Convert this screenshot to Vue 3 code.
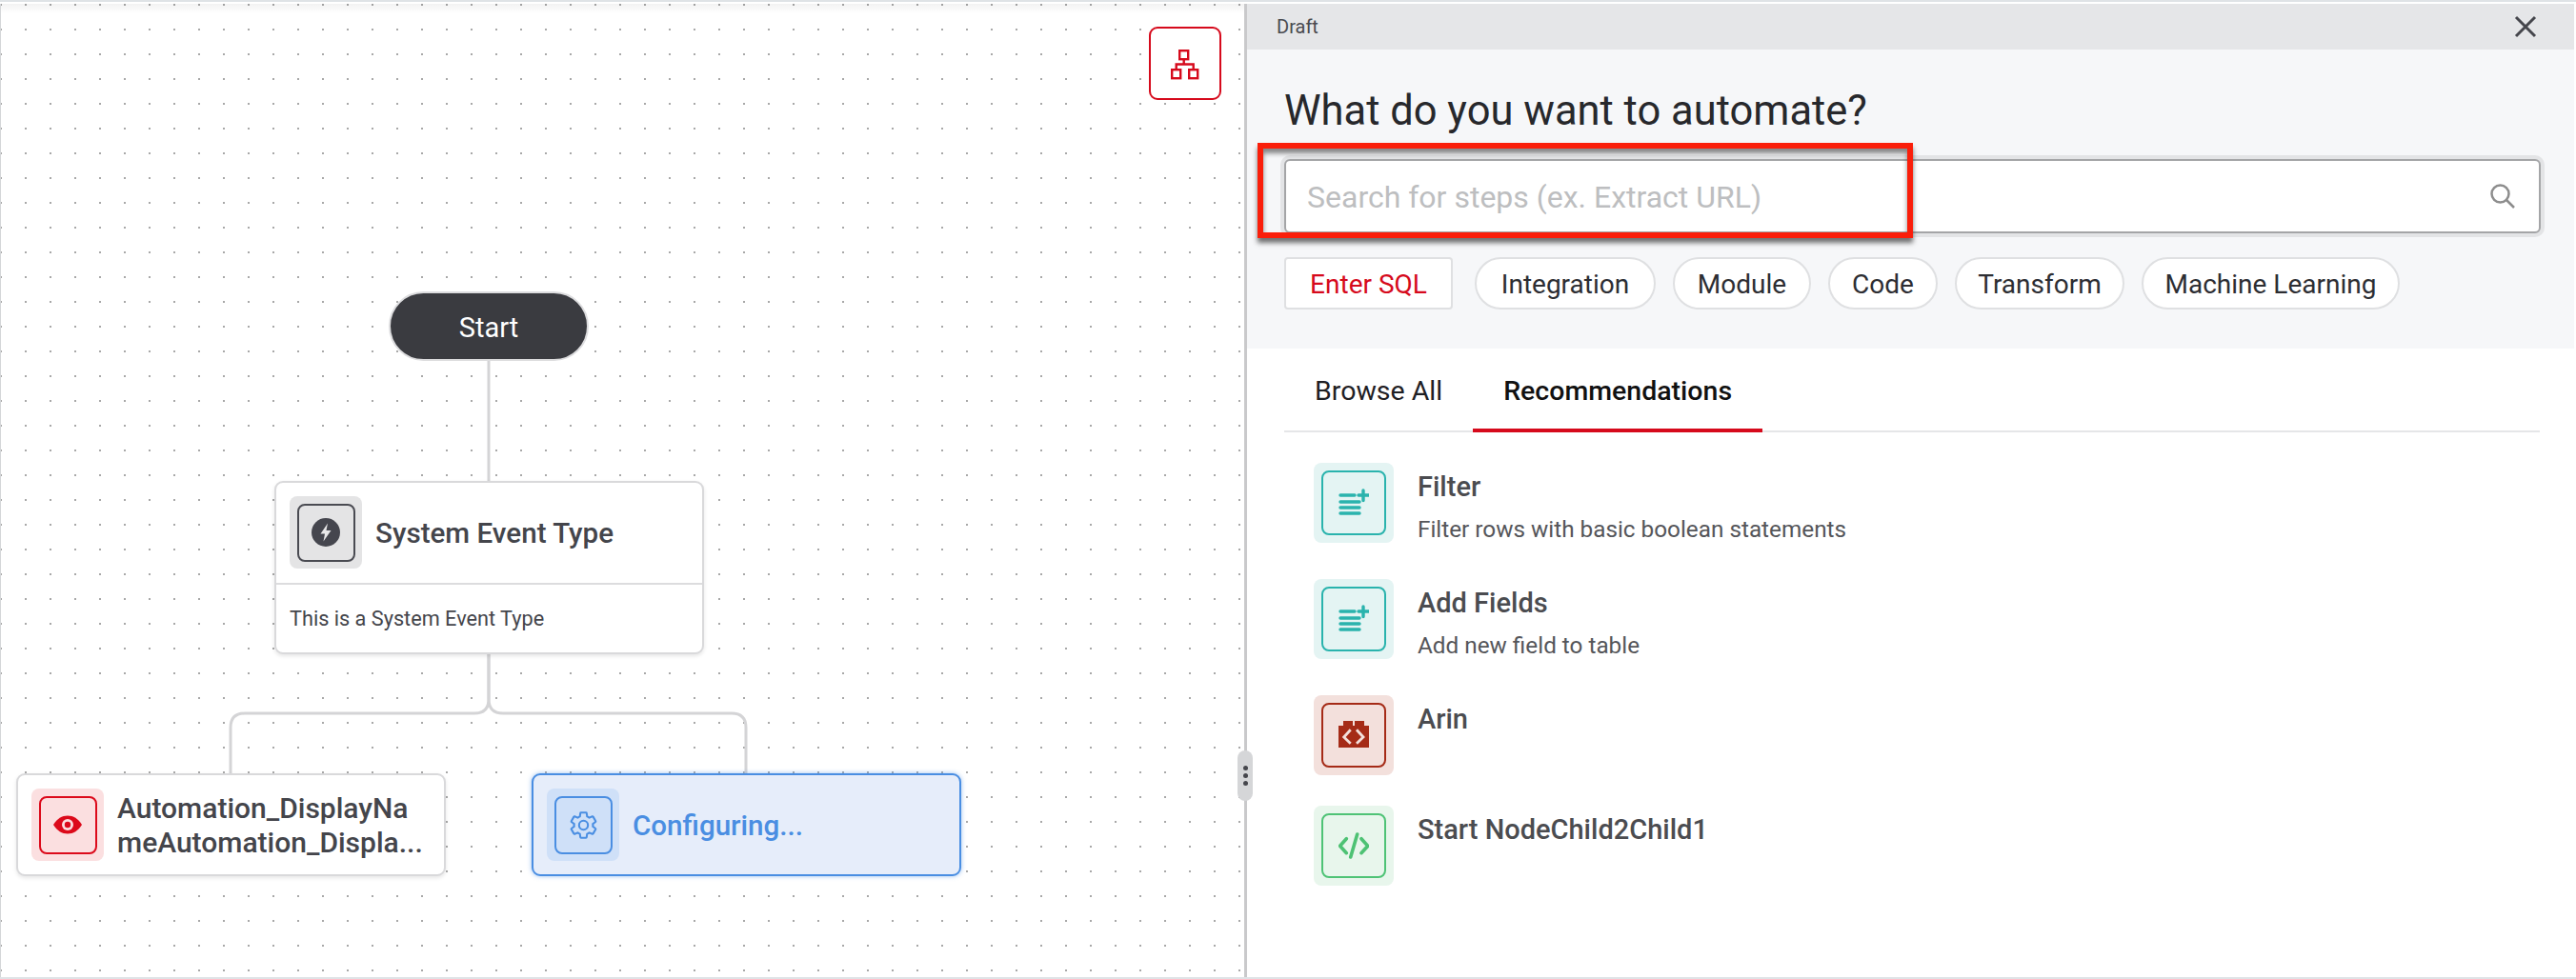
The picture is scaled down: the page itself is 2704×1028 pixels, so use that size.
<script setup>
const chips = [
  { label: 'Integration', width: 190 },
  { label: 'Module', width: 145 },
  { label: 'Code', width: 115 },
  { label: 'Transform', width: 178 },
  { label: 'Machine Learning', width: 271 }
]
const steps = [
  { title: 'Filter', desc: 'Filter rows with basic boolean statements', theme: 'teal', icon: 'list' },
  { title: 'Add Fields', desc: 'Add new field to table', theme: 'teal', icon: 'list' },
  { title: 'Arin', desc: '', theme: 'brick', icon: 'block' },
  { title: 'Start NodeChild2Child1', desc: '', theme: 'green', icon: 'code' }
]
</script>

<template>
  <div class="page">
    <div class="strip-top"></div>
    <div class="main">
      <section class="canvas">
        <button class="tree-btn" aria-label="Layout">
          <svg width="32" height="32" viewBox="0 0 32 32" fill="none" stroke="currentColor" stroke-width="2.4">
            <rect x="10.2" y="1.2" width="9" height="9" />
            <rect x="2.2" y="21.2" width="9" height="9" />
            <rect x="20.2" y="21.2" width="9" height="9" />
            <path d="M14.7 10.5V15.5M6.7 21V15.5H24.7V21" />
          </svg>
        </button>

        <svg class="wires" width="1306" height="1022" fill="none" stroke="#d4d4d6" stroke-width="3">
          <path d="M513 370V505" />
          <path d="M513 680V730Q513 745 498 745H257Q242 745 242 760V812" />
          <path d="M513 680V730Q513 745 528 745H768Q783 745 783 760V812" />
        </svg>

        <div class="start"><span class="start-label">Start</span></div>

        <div class="node event">
          <div class="event-head">
            <span class="ibox node-box gray">
              <span class="iframe">
                <svg width="32" height="32" viewBox="0 0 32 32">
                  <circle cx="16" cy="16" r="15" fill="#45464e" />
                  <path d="M18 6.5L10.5 17.5H15L13.5 25.5L21.5 14H16.5Z" fill="#e8e8e9" />
                </svg>
              </span>
            </span>
            <span class="node-title">System Event Type</span>
          </div>
          <div class="event-desc">This is a System Event Type</div>
        </div>

        <div class="node child auto">
          <span class="ibox node-box red">
            <span class="iframe">
              <svg width="32" height="20" viewBox="0 0 32 20">
                <path d="M1 10C5 3.5 10 0.5 16 0.5S27 3.5 31 10C27 16.5 22 19.5 16 19.5S5 16.5 1 10Z" fill="#dc0a1b" />
                <circle cx="16" cy="10" r="6" fill="#fbdfe0" />
                <circle cx="16" cy="10" r="3.2" fill="#dc0a1b" />
              </svg>
            </span>
          </span>
          <span class="node-title wrap">Automation_DisplayNa<br />meAutomation_Displa...</span>
        </div>

        <div class="node child config">
          <span class="ibox node-box blue">
            <span class="iframe">
              <svg width="33" height="33" viewBox="0 0 24 24" fill="none" stroke="#4a8ee2" stroke-width="1.5">
                <path d="M19.14 12.94c.04-.3.06-.61.06-.94 0-.32-.02-.64-.07-.94l2.03-1.58c.18-.14.23-.41.12-.61l-1.92-3.32c-.12-.22-.37-.29-.59-.22l-2.39.96c-.5-.38-1.03-.7-1.62-.94l-.36-2.54c-.04-.24-.24-.41-.48-.41h-3.84c-.24 0-.43.17-.47.41l-.36 2.54c-.59.24-1.13.57-1.62.94l-2.39-.96c-.22-.08-.47 0-.59.22L2.74 8.87c-.12.21-.08.47.12.61l2.03 1.58c-.05.3-.09.63-.09.94s.02.64.07.94l-2.03 1.58c-.18.14-.23.41-.12.61l1.92 3.32c.12.22.37.29.59.22l2.39-.96c.5.38 1.03.7 1.62.94l.36 2.54c.05.24.24.41.48.41h3.84c.24 0 .44-.17.47-.41l.36-2.54c.59-.24 1.13-.56 1.62-.94l2.39.96c.22.08.47 0 .59-.22l1.92-3.32c.12-.22.07-.47-.12-.61l-2.01-1.58z" />
                <circle cx="12" cy="12" r="3.4" />
              </svg>
            </span>
          </span>
          <span class="node-title blue-text">Configuring...</span>
        </div>

        <div class="handle"><i></i><i></i><i></i></div>
      </section>

      <section class="panel">
        <header class="draft">
          <span>Draft</span>
          <svg width="24" height="24" viewBox="0 0 24 24" stroke="#45464c" stroke-width="3" fill="none">
            <path d="M2 2L22 22M22 2L2 22" />
          </svg>
        </header>

        <div class="intro">
          <h1>What do you want to automate?</h1>
          <div class="search">
            <span class="placeholder">Search for steps (ex. Extract URL)</span>
            <svg width="28" height="28" viewBox="0 0 28 28" fill="none" stroke="#8d8d8d" stroke-width="2.5">
              <circle cx="11.5" cy="11.5" r="9" />
              <path d="M18 18L26 26" />
            </svg>
          </div>
          <div class="chips">
            <span class="chip sql">Enter SQL</span>
            <span v-for="c in chips" :key="c.label" class="chip" :style="{ width: c.width + 'px' }">{{ c.label }}</span>
          </div>
        </div>

        <nav class="tabs">
          <span class="tab">Browse All</span>
          <span class="tab active">Recommendations</span>
        </nav>

        <ul class="steps">
          <li v-for="s in steps" :key="s.title" class="step">
            <span class="ibox step-box" :class="s.theme">
              <span class="iframe">
                <svg v-if="s.icon === 'list'" width="32" height="32" viewBox="0 0 32 32" fill="none" stroke="#2ab3ad" stroke-width="3.4" stroke-linecap="round">
                  <path d="M2 8H17M2 15H22M2 21H22M2 27H22M26 3V13.5M21 8H31.5" />
                </svg>
                <svg v-else-if="s.icon === 'block'" width="32" height="32" viewBox="0 0 32 32">
                  <path d="M5 1H15V6H17V1H27V6H32V29H0V6H5Z" fill="#a52b17" />
                  <path d="M12.7 10.3L5.7 18L12.7 24.7M19 10.3L26 18L19 24.7" fill="none" stroke="#f3e0dc" stroke-width="2.8" />
                </svg>
                <svg v-else width="32" height="32" viewBox="0 0 32 32" fill="none" stroke="#4ec274" stroke-width="3.6" stroke-linecap="round" stroke-linejoin="round">
                  <path d="M8.3 8.7L1.6 16.3L8.3 23.7M24 8.7L30.8 16.3L24 23.7M19.7 4L12.7 28" />
                </svg>
              </span>
            </span>
            <span class="step-text">
              <span class="step-title">{{ s.title }}</span>
              <span v-if="s.desc" class="step-desc">{{ s.desc }}</span>
            </span>
          </li>
        </ul>

        <div class="callout"></div>
      </section>
      <div class="edge"></div>
    </div>
    <div class="strip-bottom"></div>
  </div>
</template>

<style>
html, body { margin: 0; background: #fff; }
</style>

<style scoped>
.page {
  width: 2704px;
  height: 1028px;
  display: flex;
  flex-direction: column;
  overflow: hidden;
  font-family: Roboto, "Liberation Sans", sans-serif;
  background: #fff;
}
.strip-top { height: 2px; background: #dfe3e6; margin-bottom: 2px; flex: none; }
.strip-bottom { height: 2px; background: #dfe3e6; flex: none; }
.main { flex: 1; display: flex; min-height: 0; }
.edge { width: 2px; background: #fff; flex: none; }

.canvas {
  position: relative;
  width: 1309px;
  flex: none;
  box-sizing: border-box;
  border-left: 1px solid #d4d6d8;
  border-right: 3px solid #c9c9cb;
  background-color: #fff;
  background-image:
    linear-gradient(rgba(0, 0, 0, 0.05), rgba(0, 0, 0, 0) 10px),
    radial-gradient(circle at 1px 1px, #a8a8a8 0.9px, rgba(255, 255, 255, 0) 1.2px);
  background-size: 100% 12px, 26px 26px;
  background-repeat: no-repeat, repeat;
  background-origin: border-box;
}
.tree-btn {
  position: absolute;
  left: 1205px;
  top: 24px;
  width: 76px;
  height: 77px;
  padding: 2px 0 0;
  box-sizing: border-box;
  border: 2px solid #d60a1c;
  border-radius: 9px;
  background: #fff;
  color: #d60a1c;
  display: flex;
  align-items: center;
  justify-content: center;
}
.wires { position: absolute; left: -1px; top: 0; }
.start {
  position: absolute;
  left: 407px;
  top: 302px;
  width: 210px;
  height: 73px;
  box-sizing: border-box;
  border: 2px solid #dcdcde;
  border-radius: 37px;
  background: #3a3b40;
  color: #fff;
  font-size: 29px;
  line-height: 71px;
  text-align: center;
}
.start-label { display: block; padding-top: 1px; }
.node {
  position: absolute;
  box-sizing: border-box;
  background: #fff;
  border: 2px solid #d9d9db;
  border-radius: 9px;
  box-shadow: 0 2px 4px rgba(0, 0, 0, 0.1);
}
.event { left: 287px; top: 501px; width: 451px; height: 182px; }
.event-head {
  height: 107px;
  box-sizing: border-box;
  padding: 14px 0 0 14px;
  display: flex;
  align-items: flex-start;
  gap: 14px;
  border-bottom: 2px solid #dcdcde;
}
.event-head .node-title { line-height: 78px; }
.event-desc {
  padding-left: 14px;
  font-size: 21.7px;
  line-height: 72px;
  color: #44454b;
}
.child {
  top: 808px;
  width: 451px;
  height: 108px;
  display: flex;
  align-items: center;
  padding-left: 14px;
  gap: 14px;
}
.auto { left: 16px; }
.config {
  left: 557px;
  background: #e6edfa;
  border-color: #4a8ee2;
  box-shadow: 0 0 5px rgba(74, 142, 226, 0.55);
}
.node-title {
  font-size: 29.6px;
  font-weight: 500;
  color: #44454b;
  line-height: 36px;
  white-space: nowrap;
}
.wrap { font-size: 30px; padding-top: 1px; }
.blue-text { color: #4a8ee2; padding-top: 2px; }
.handle {
  position: absolute;
  left: 1298px;
  top: 784px;
  width: 16px;
  height: 53px;
  background: #d5d6d8;
  border-radius: 8px;
  z-index: 2;
  display: flex;
  flex-direction: column;
  align-items: center;
  justify-content: center;
  gap: 3px;
}
.handle i { width: 5px; height: 5px; border-radius: 50%; background: #45464c; }

.ibox { display: flex; align-items: center; justify-content: center; flex: none; border-radius: 8px; }
.iframe {
  box-sizing: border-box;
  border: 2px solid;
  border-radius: 8px;
  display: flex;
  align-items: center;
  justify-content: center;
}
.node-box { width: 76px; height: 76px; }
.node-box .iframe { width: 61px; height: 61px; }
.step-box { width: 84px; height: 84px; }
.step-box .iframe { width: 68px; height: 68px; }
.gray { background: #e4e4e5; }
.gray .iframe { border-color: #4a4b52; }
.red { background: #fbdfe0; }
.red .iframe { border-color: #dc0a1b; }
.blue { background: #cfe0f8; }
.blue .iframe { border-color: #4a8ee2; }
.teal { background: #e4f4f3; }
.teal .iframe { border-color: #2ab3ad; }
.brick { background: #f3e0dc; }
.brick .iframe { border-color: #a52b17; }
.green { background: #e8f6ec; }
.green .iframe { border-color: #4fc376; }

.panel { position: relative; flex: 1; min-width: 0; display: flex; flex-direction: column; background: #fff; }
.draft {
  height: 48px;
  flex: none;
  background: #e5e6e8;
  display: flex;
  align-items: center;
  justify-content: space-between;
  padding: 0 39px 0 31px;
  font-size: 20px;
  color: #4a4b50;
}
.intro { height: 314px; flex: none; box-sizing: border-box; background: #f6f7f9; padding: 42px 35px 0 39px; }
h1 { margin: 0; font-size: 43.5px; font-weight: 400; line-height: 46px; color: #27282c; }
.search {
  margin-top: 27px;
  height: 78px;
  box-sizing: border-box;
  border: 2px solid #a4a5a7;
  border-radius: 6px;
  background: #fff;
  box-shadow: 0 0 0 4px #e3e4e6;
  display: flex;
  align-items: center;
  justify-content: space-between;
  padding: 0 24px 0 22px;
}
.placeholder { font-size: 32px; line-height: 40px; padding-top: 2px; color: #bdbec0; }
.chips { margin-top: 25px; display: flex; gap: 18px; }
.chip {
  height: 55px;
  box-sizing: border-box;
  border: 2px solid #dfe0e2;
  border-radius: 28px;
  background: #fff;
  font-size: 28px;
  line-height: 53px;
  text-align: center;
  white-space: nowrap;
  color: #2d2e33;
}
.sql { width: 177px; border-radius: 4px; color: #d60a1c; margin-right: 5px; }

.tabs { margin: 0 36px 0 39px; height: 88px; flex: none; display: flex; border-bottom: 2px solid #e5e6e8; box-sizing: border-box; }
.tab { padding: 0 32px; font-size: 28.5px; line-height: 90px; height: 88px; color: #1f2024; box-sizing: border-box; }
.active { font-weight: 500; color: #111; border-bottom: 4px solid #d60a1c; }

.steps { list-style: none; margin: 0; padding: 32px 0 0 70px; }
.step { display: flex; gap: 25px; height: 84px; margin-bottom: 38px; }
.step:nth-child(3) { margin-bottom: 32px; }
.step-text { display: flex; flex-direction: column; padding-top: 7px; }
.step-title { font-size: 29px; font-weight: 500; line-height: 36px; color: #4b4c50; }
.step-desc { margin-top: 9px; font-size: 24.3px; line-height: 36px; color: #55565a; }

.callout {
  position: absolute;
  left: 11px;
  top: 146px;
  width: 688px;
  height: 100px;
  box-sizing: border-box;
  border: 6px solid #fa1e0a;
  box-shadow: 0 5px 5px rgba(40, 40, 40, 0.65), inset 0 5px 5px rgba(40, 40, 40, 0.55);
  pointer-events: none;
}
</style>
